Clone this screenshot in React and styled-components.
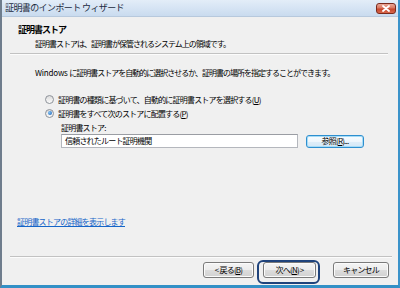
import React from 'react'
import styled, { createGlobalStyle } from 'styled-components'

const Global = createGlobalStyle`
  html, body { margin: 0; padding: 0; background: #f0f0f0; }
  body {
    font-family: "Noto Sans CJK JP", "Liberation Sans", sans-serif;
    color: #000;
  }
`

const Window = styled.div`
  width: 400px;
  height: 288px;
  box-sizing: border-box;
  display: flex;
  flex-direction: column;
  background: #f0f0f0;
  border-left: 2px solid #6f7d8d;
  border-right: 2px solid #3b93ca;
  border-bottom: 3px solid #3390c6;
`

const TitleBar = styled.div`
  height: 17px;
  flex: none;
  display: flex;
  align-items: center;
  justify-content: space-between;
  padding: 0 2px 0 3px;
  background: linear-gradient(#e3edf8, #c9dbef);
  border-bottom: 1px solid #b7c9dd;
  box-sizing: border-box;
`

const TitleText = styled.span`
  font-size: 9px;
  letter-spacing: -0.6px;
  color: #1c2b3e;
  line-height: 12px;
`

const CloseBox = styled.div`
  width: 20px;
  height: 11px;
  box-sizing: border-box;
  border: 1px solid #7a2a1c;
  border-radius: 3px;
  background: linear-gradient(#eaa898 0%, #d9765f 45%, #c5452c 55%, #d8674b 100%);
  display: flex;
  align-items: center;
  justify-content: center;
`

const Content = styled.div`
  flex: 1;
  display: flex;
  flex-direction: column;
`

const Header = styled.div`
  padding: 7px 0 0 16px;
`

const HeaderTitle = styled.div`
  font-size: 9px;
  font-weight: bold;
  letter-spacing: -1px;
  line-height: 12px;
`

const Text = styled.div`
  font-size: 8px;
  letter-spacing: ${p => p.$ls || -1}px;
  line-height: 12px;
  white-space: nowrap;
  margin-top: ${p => p.$mt || 0}px;
  padding-left: ${p => p.$pl || 0}px;
`

const Latin = styled.span`
  letter-spacing: -0.2px;
`

const Separator = styled.div`
  height: 1px;
  border-top: 1px solid #c2c2c2;
  background: #fcfcfc;
  margin: ${p => p.$mt}px ${p => p.$mr}px 0 8px;
`

const Body = styled.div`
  padding-left: 33px;
  display: flex;
  flex-direction: column;
`

const RadioGroup = styled.div`
  margin: 13px 0 0 10px;
  display: flex;
  flex-direction: column;
`

const RadioRow = styled.label`
  height: 14px;
  display: flex;
  align-items: center;
  gap: 4px;
  font-size: 8px;
  letter-spacing: -0.8px;
  white-space: nowrap;
`

const RadioDot = styled.span`
  width: 9px;
  height: 9px;
  box-sizing: border-box;
  border-radius: 50%;
  border: 1px solid #8d9299;
  background: linear-gradient(#dcdcdc, #fbfbfb);
  display: flex;
  align-items: center;
  justify-content: center;
  &::after {
    content: '';
    width: 4px;
    height: 4px;
    border-radius: 50%;
    background: ${p => p.$on ? 'radial-gradient(circle at 35% 35%, #7fc2f5, #1a5fb4)' : 'transparent'};
  }
`

const StoreBlock = styled.div`
  padding-left: 26px;
  margin-top: 2px;
  display: flex;
  flex-direction: column;
`

const InputRow = styled.div`
  display: flex;
  align-items: center;
  gap: 8px;
`

const StoreInput = styled.div`
  width: 237px;
  height: 14px;
  box-sizing: border-box;
  border: 1px solid #b4b7bd;
  border-top-color: #9a9da3;
  background: #fff;
  font-size: 8px;
  letter-spacing: -0.8px;
  line-height: 12px;
  padding-left: 3px;
`

const Button = styled.div`
  width: ${p => p.$w}px;
  height: ${p => p.$h || 16}px;
  margin-left: ${p => p.$ml || 0}px;
  box-sizing: border-box;
  border: 1px solid ${p => p.$glow ? '#2e8fcf' : '#7a7a7a'};
  border-radius: 3px;
  background: ${p => p.$glow
    ? 'linear-gradient(#f8fcff 0%, #eef6fc 50%, #dfeef9 50%, #d4e8f6 100%)'
    : 'linear-gradient(#f4f4f4 0%, #ececec 50%, #dddddd 50%, #d1d1d1 100%)'};
  box-shadow: ${p => p.$glow ? 'inset 0 0 0 1px #a6dcf7' : 'inset 0 0 0 1px #fbfbfb'};
  display: flex;
  align-items: center;
  justify-content: center;
  font-size: 8px;
  letter-spacing: -0.8px;
  line-height: 12px;
  white-space: pre;
  position: relative;
  ${p => p.$focus && `
    &::after {
      content: '';
      position: absolute;
      top: -3px;
      left: -7px;
      right: -5px;
      bottom: -7px;
      border: 2px solid #1f437c;
      border-radius: 6px;
    }
  `}
`

const U = styled.span`
  text-decoration: underline;
`

const Spacer = styled.div`
  flex: 1;
`

const Link = styled.a`
  margin-left: 15px;
  font-size: 8px;
  letter-spacing: -0.8px;
  line-height: 12px;
  color: #1565c8;
  text-decoration: underline;
  align-self: flex-start;
`

const Footer = styled.div`
  display: flex;
  justify-content: flex-end;
  padding: 4px 9px 7px 0;
`

export default function App() {
  return (
    <>
      <Global />
      <Window>
        <TitleBar>
          <TitleText>証明書のインポート ウィザード</TitleText>
          <CloseBox>
            <svg width="8" height="7" viewBox="0 0 8 7">
              <path d="M1 1 L7 6 M7 1 L1 6" stroke="#fff" strokeWidth="1.8" strokeLinecap="round" />
            </svg>
          </CloseBox>
        </TitleBar>
        <Content>
          <Header>
            <HeaderTitle>証明書ストア</HeaderTitle>
            <Text $mt={2} $pl={17}>証明書ストアは、証明書が保管されるシステム上の領域です。</Text>
          </Header>
          <Separator $mt={3} $mr={10} />
          <Body>
            <Text $mt={12}><Latin>Windows </Latin>に証明書ストアを自動的に選択させるか、証明書の場所を指定することができます。</Text>
            <RadioGroup>
              <RadioRow>
                <RadioDot />
                <span>証明書の種類に基づいて、自動的に証明書ストアを選択する(<U>U</U>)</span>
              </RadioRow>
              <RadioRow>
                <RadioDot $on />
                <span>証明書をすべて次のストアに配置する(<U>P</U>)</span>
              </RadioRow>
            </RadioGroup>
            <StoreBlock>
              <Text $ls={-0.8}>証明書ストア:</Text>
              <InputRow>
                <StoreInput>信頼されたルート証明機関</StoreInput>
                <Button $w={58} $h={13} $glow><span>参照(<U>R</U>)...</span></Button>
              </InputRow>
            </StoreBlock>
          </Body>
          <Spacer />
          <Link>証明書ストアの詳細を表示します</Link>
          <Separator $mt={28} $mr={6} />
          <Footer>
            <Button $w={51}><span>&lt; 戻る(<U>B</U>)</span></Button>
            <Button $w={53} $ml={9} $focus><span>次へ(<U>N</U>) &gt;</span></Button>
            <Button $w={56} $ml={17}><span>キャンセル</span></Button>
          </Footer>
        </Content>
      </Window>
    </>
  )
}
